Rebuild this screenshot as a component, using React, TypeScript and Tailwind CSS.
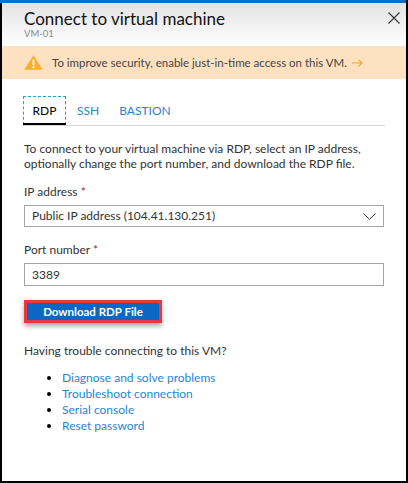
const LINKS = [
  "Diagnose and solve problems",
  "Troubleshoot connection",
  "Serial console",
  "Reset password",
];

function WarningIcon() {
  return (
    <svg width="19" height="15" viewBox="0 0 19 15" className="shrink-0">
      <path d="M9.5 0.3 L18.8 14.7 L0.2 14.7 Z" fill="#f6b02a" />
      <rect x="8.6" y="4.5" width="1.8" height="5.6" fill="#ffffff" />
      <rect x="8.6" y="11.2" width="1.8" height="1.8" fill="#ffffff" />
    </svg>
  );
}

export default function App() {
  return (
    <div
      className="w-[408px] h-[483px] bg-white flex flex-col overflow-hidden border-r-2 border-black"
      style={{ fontFamily: 'Lato, "Noto Sans", sans-serif' }}
    >
      <div className="h-[3px] bg-[#0072c6] shrink-0" />
      <div className="flex-1 flex flex-col border-l-2 border-b-2 border-black">
        {/* header */}
        <div className="relative h-[43px] shrink-0 bg-gradient-to-b from-[#e3e3e3] to-white px-[22px] pt-[6px]">
          <div className="text-[17px] leading-[20px] text-[#111] whitespace-nowrap">
            Connect to virtual machine
          </div>
          <div className="text-[9.5px] leading-[11px] text-[#8a8a8a] -mt-[1px]">VM-01</div>
          <svg className="absolute right-[6px] top-[9px]" width="12" height="12" viewBox="0 0 12 12">
            <path d="M0.5 0.5 L11.5 11.5 M11.5 0.5 L0.5 11.5" stroke="#333" strokeWidth="1.1" />
          </svg>
        </div>

        {/* warning */}
        <div className="h-[33px] shrink-0 bg-[#fde1c0] flex items-center pl-[22px] whitespace-nowrap">
          <WarningIcon />
          <span className="ml-[9px] text-[11.5px] text-[#444]">
            To improve security, enable just-in-time access on this VM.
          </span>
          <svg className="ml-[5px] shrink-0" width="11" height="8" viewBox="0 0 11 8">
            <path d="M0 4 L10 4 M6.5 0.6 L10 4 L6.5 7.4" stroke="#f6a623" strokeWidth="1.1" fill="none" />
          </svg>
        </div>

        {/* body */}
        <div className="px-[22px] pt-[17px] flex flex-col text-[12px] text-[#333]">
          <div className="flex items-end border-b border-[#d9d9d9] w-[362px] -ml-px">
            <div className="relative w-[43px] h-[29px] border border-dashed border-[#1ba1e2] flex items-center justify-center text-black">
              RDP
              <div className="absolute -left-px -right-px -bottom-px h-[2px] bg-black" />
            </div>
            <div className="h-[29px] flex items-center text-[#2a84d2] ml-[11px]">SSH</div>
            <div className="h-[29px] flex items-center text-[#2a84d2] ml-[20px]">BASTION</div>
          </div>

          <p className="leading-[15px] mt-[15px]">
            To connect to your virtual machine via RDP, select an IP address, optionally change the port number, and download the RDP file.
          </p>

          <div className="mt-[13px] leading-[16px]">
            IP address <span className="text-[#a4262c]">*</span>
          </div>
          <div className="mt-[5px] h-[22px] w-[360px] border border-[#a3a3a3] flex items-center justify-between pl-[7px] pr-[7px]">
            <span>Public IP address (104.41.130.251)</span>
            <svg width="13" height="7" viewBox="0 0 13 7">
              <path d="M0.5 0.5 L6.5 6.3 L12.5 0.5" stroke="#333" strokeWidth="1" fill="none" />
            </svg>
          </div>

          <div className="mt-[15px] leading-[16px]">
            Port number <span className="text-[#a4262c]">*</span>
          </div>
          <div className="mt-[5px] h-[23px] w-[360px] border border-[#a3a3a3] flex items-center pl-[7px]">
            3389
          </div>

          <div className="mt-[14px] self-start border-[3px] border-[#e8373d] shadow-[0_3px_5px_rgba(0,0,0,0.35)]">
            <div className="w-[132px] h-[17px] bg-[#0a67c3] flex items-center justify-center text-[11.5px] font-bold text-white">
              Download RDP File
            </div>
          </div>

          <div className="mt-[20px] leading-[16px]">Having trouble connecting to this VM?</div>
          <ul className="mt-[11px] pl-[23px] flex flex-col">
            {LINKS.map((l) => (
              <li key={l} className="flex items-center h-[16px] leading-[16px] text-[#2a84d2]">
                <span className="w-[4px] h-[4px] rounded-full bg-black mr-[11px] shrink-0" />
                {l}
              </li>
            ))}
          </ul>
        </div>
      </div>
    </div>
  );
}
